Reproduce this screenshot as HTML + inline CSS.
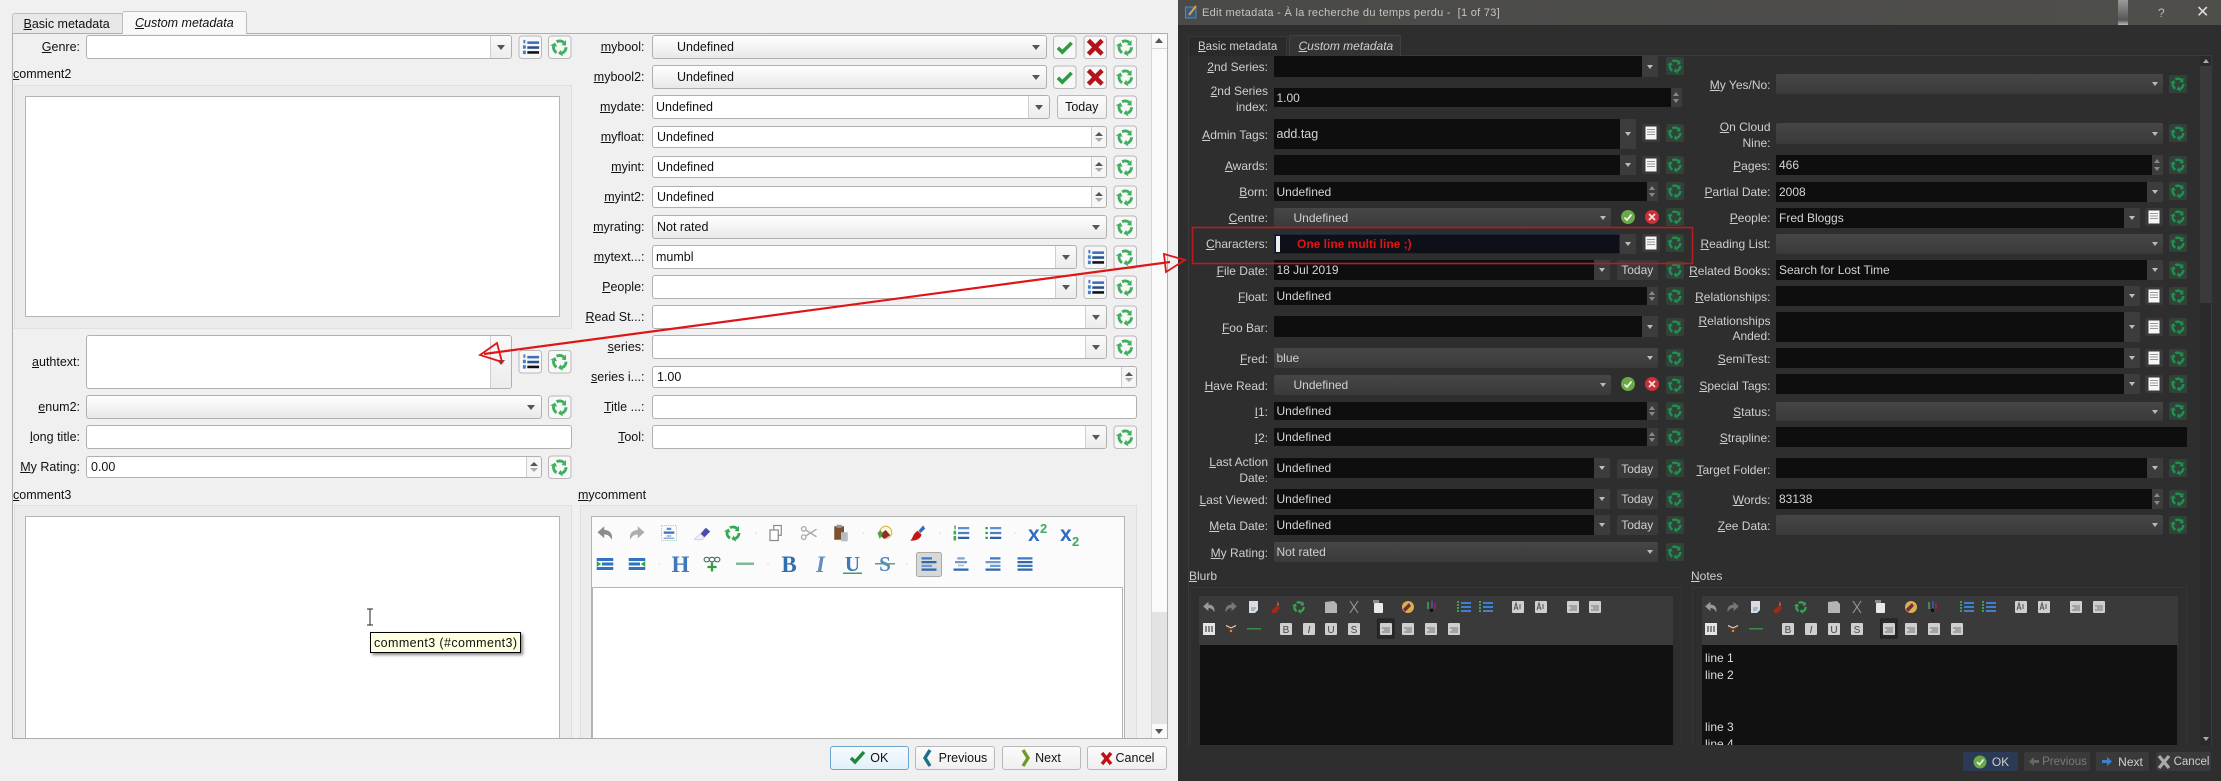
<!DOCTYPE html>
<html><head><meta charset="utf-8"><title>Edit metadata</title>
<style>
html,body{margin:0;padding:0;width:2221px;height:781px;overflow:hidden;background:#f0f0f0}
body{font:12.5px "Liberation Sans",sans-serif;color:#111;position:relative}
.b{position:absolute;box-sizing:border-box;display:flex;align-items:center;white-space:nowrap}
.n{position:absolute;white-space:nowrap;line-height:16px;height:16px}
.p1,.p2,.p3,.p4{position:absolute;text-align:right;line-height:16px;height:16px;white-space:nowrap}
.p1{left:0;width:80px}.p2{left:480px;width:164.5px}.p3{left:1190px;width:78px;margin-top:1px}.p4{left:1680px;width:90.5px;margin-top:1px}
.li{background:#fff;border:1px solid #b0b0b0;border-radius:3px;padding-left:3px}
.lc{background:linear-gradient(#fefefe,#e9e9e9);border:1px solid #b0b0b0;border-radius:3px;padding-left:3px}
.la,.ls{position:absolute;right:0;top:0;bottom:0;border-left:1px solid #cfcfcf;background:linear-gradient(#fafafa,#ececec);border-radius:0 3px 3px 0}
.la{width:20px}.ls{width:14px;background:#f6f6f6}
.la:after,.lz:after{content:"";position:absolute;left:50%;top:50%;margin:-2px 0 0 -4px;border:4px solid transparent;border-top:5px solid #555;border-bottom:0}
.lz{position:absolute;right:0;top:0;bottom:0;width:20px}
.ls:before{content:"";position:absolute;left:3px;top:5px;border:4px solid transparent;border-bottom:4px solid #555;border-top:0}
.ls:after{content:"";position:absolute;left:3px;bottom:5px;border:4px solid transparent;border-top:4px solid #aaa;border-bottom:0}
.gb{position:absolute;box-sizing:border-box;background:#ececec;border:1px solid #e0e0e0}
.te{position:absolute;box-sizing:border-box;background:#fff;border:1px solid #b4b4b4}
.lb{position:absolute;box-sizing:border-box;background:linear-gradient(#fbfbfb,#efefef);border:1px solid #b8b8b8;border-radius:3px;display:flex;align-items:center;justify-content:center}
#dark{position:absolute;left:0;top:0;width:2221px;height:781px;color:#cfcfcf;font-size:12px;filter:blur(.35px)}
#dark u{text-decoration-thickness:1px}
.di{background:#0e0e0e;padding-left:3px;color:#d4d4d4}
.dc{background:linear-gradient(#464646,#3a3a3a);padding-left:3px;color:#d0d0d0;border-radius:2px}
.da,.ds{position:absolute;background:#3c3c3c}
.da:after{content:"";position:absolute;left:50%;top:50%;margin:-2px 0 0 -3px;border:3px solid transparent;border-top:4px solid #bbb;border-bottom:0}
.ds:before{content:"";position:absolute;left:2px;top:4px;border:3px solid transparent;border-bottom:4px solid #888;border-top:0}
.ds:after{content:"";position:absolute;left:2px;bottom:4px;border:3px solid transparent;border-top:4px solid #888;border-bottom:0}
.dz{position:absolute;width:16px}
.dz:after{content:"";position:absolute;left:50%;top:50%;margin:-2px 0 0 -3px;border:3px solid transparent;border-top:4px solid #bbb;border-bottom:0}
.db{position:absolute;box-sizing:border-box;background:#3a3a3a;border-radius:2px;display:flex;align-items:center;justify-content:center;color:#cfcfcf}
svg{position:absolute;left:0;top:0;overflow:visible}
</style></head><body>
<svg width="0" height="0" style="position:absolute"><defs>
<g id="ring"><g id="arc"><path d="M20 12A8 8 0 0 1 14.700 19.500" fill="none" stroke="currentColor" stroke-width="3.800"/><path d="M16.200 23.700L13.200 15.300L9.800 20Z" fill="currentColor"/></g><use href="#arc" transform="rotate(120 12 12)"/><use href="#arc" transform="rotate(240 12 12)"/></g>
<symbol id="R" viewBox="0 0 24 24"><rect x=".5" y=".5" width="23" height="23" rx="3" fill="#f7f7f7" stroke="#b8b8b8"/><g color="#3fae5f" transform="translate(2.400 2.400) scale(.8)"><use href="#ring"/></g></symbol>
<symbol id="LB" viewBox="0 0 24 24"><rect x=".5" y=".5" width="23" height="23" rx="3" fill="#f7f7f7" stroke="#b8b8b8"/><rect x="9" y="6" width="12" height="2.6" fill="#3f6fb5"/><rect x="9" y="11" width="12" height="2.6" fill="#2c4f86"/><rect x="9" y="16" width="12" height="2.6" fill="#111"/><rect x="5" y="4.5" width="2" height="3.5" fill="#3f7fd0"/><rect x="4.5" y="10" width="3" height="3.5" fill="#3f7fd0"/><rect x="4.5" y="15.5" width="3" height="3.5" fill="#3f7fd0"/></symbol>
<symbol id="CB" viewBox="0 0 24 24"><rect x=".5" y=".5" width="23" height="23" rx="3" fill="#f7f7f7" stroke="#b8b8b8"/><path d="M5 12.5l4.5 4.5L19 7.5" fill="none" stroke="#2f9a3f" stroke-width="3.6"/></symbol>
<symbol id="XB" viewBox="0 0 24 24"><rect x=".5" y=".5" width="23" height="23" rx="3" fill="#f7f7f7" stroke="#b8b8b8"/><path d="M5 5L19 19M19 5L5 19" fill="none" stroke="#b3141c" stroke-width="4.6"/></symbol>
<symbol id="DR" viewBox="0 0 18 18"><rect width="18" height="18" rx="2" fill="#324238"/><g color="#1f8f52" transform="translate(1 1) scale(.667)"><use href="#ring"/></g></symbol>
<symbol id="DN" viewBox="0 0 18 18"><rect width="18" height="18" rx="2" fill="#3a3a3a"/><rect x="3.5" y="2.5" width="11" height="13" fill="#f6f6f6"/><path d="M5 5.500h8M5 8h8M5 10.500h8" stroke="#999" stroke-width="1"/></symbol>
<symbol id="DC" viewBox="0 0 14 14"><circle cx="7" cy="7" r="7" fill="#6aa84a"/><path d="M3.5 7.5l2.5 2.5 4.5-5.5" fill="none" stroke="#eaf5e0" stroke-width="1.8"/></symbol>
<symbol id="DX" viewBox="0 0 14 14"><circle cx="7" cy="7" r="7" fill="#c9303a"/><path d="M4 4l6 6M10 4l-6 6" fill="none" stroke="#f5dede" stroke-width="1.8"/></symbol>
<symbol id="un" viewBox="0 0 24 24"><path d="M2 11L11 3V8C18 8 23 13 21 21C18 15 15 14 11 14V19Z" fill="currentColor"/></symbol>
<symbol id="re" viewBox="0 0 24 24"><path d="M22 11L13 3V8C6 8 1 13 3 21C6 15 9 14 13 14V19Z" fill="currentColor"/></symbol>
<symbol id="cl" viewBox="0 0 24 24"><rect x="2" y="2" width="20" height="20" fill="none" stroke="#7fbf9a" stroke-dasharray="1.5 1.5"/><rect x="9" y="5" width="6" height="3" fill="#5f8fd0"/><rect x="5" y="10" width="14" height="3" fill="#3f6fb5"/><rect x="9" y="15" width="6" height="2" fill="#8fb0dc"/><rect x="5" y="18" width="14" height="2" fill="#8fb0dc"/></symbol>
<symbol id="er" viewBox="0 0 24 24"><polygon points="10,13 17,5 23,10 15,18" fill="#4a4ab0"/><polygon points="10,13 15,18 12,21 3,21 2,20" fill="#f0f0f6" stroke="#c4c8d8"/></symbol>
<symbol id="rc" viewBox="0 0 24 24"><g color="#2faa50"><use href="#ring"/></g></symbol>
<symbol id="cp" viewBox="0 0 24 24"><rect x="9" y="2" width="10" height="13" fill="#fff" stroke="#888" stroke-width="1.6"/><rect x="4" y="8" width="11" height="14" fill="#fff" stroke="#888" stroke-width="1.6"/></symbol>
<symbol id="sc" viewBox="0 0 24 24"><g fill="none" stroke="#aaa" stroke-width="1.8"><circle cx="5" cy="6.5" r="3"/><circle cx="5" cy="17.5" r="3"/><path d="M7.5 8L22 17M7.5 16L22 7"/></g></symbol>
<symbol id="pa" viewBox="0 0 24 24"><rect x="3" y="3" width="13" height="18" fill="#7a5232"/><rect x="6" y="1" width="7" height="4" fill="#999"/><rect x="12" y="11" width="9" height="12" fill="#b8bcc0"/></symbol>
<symbol id="bu" viewBox="0 0 24 24"><circle cx="13" cy="11" r="8" fill="#fff6d8" stroke="#e0b84a" stroke-width="1.6"/><polygon points="5,14 13,8 19,15 11,20" fill="#8a3030"/><path d="M2 12L6 8L9 13L5 20Z" fill="#4aa84a"/></symbol>
<symbol id="br" viewBox="0 0 24 24"><polygon points="14,9 20,2 23,6 17,12" fill="#2f6fb5"/><path d="M13 9L18 14C17 20 10 23 3 22C7 19 6 13 13 9Z" fill="#c01818"/></symbol>
<symbol id="ol" viewBox="0 0 24 24"><rect x="8" y="4" width="15" height="3" fill="#5f8fd0"/><rect x="8" y="10.500" width="15" height="3" fill="#4f7fc0"/><rect x="8" y="17" width="15" height="3" fill="#2f5fa8"/><rect x="3" y="2" width="2" height="5" fill="#4aa84a"/><rect x="2" y="9" width="3.500" height="5" fill="#4aa84a"/><rect x="2" y="16" width="3.500" height="6" fill="#4aa84a"/></symbol>
<symbol id="ul" viewBox="0 0 24 24"><rect x="8" y="4" width="15" height="3" fill="#5f8fd0"/><rect x="8" y="10.500" width="15" height="3" fill="#4f7fc0"/><rect x="8" y="17" width="15" height="3" fill="#2f5fa8"/><rect x="2" y="4" width="3" height="3" fill="#2f8f4a"/><rect x="2" y="10.500" width="3" height="3" fill="#2f8f4a"/><rect x="2" y="17" width="3" height="3" fill="#2f8f4a"/></symbol>
<symbol id="in" viewBox="0 0 24 24"><rect x="1" y="4" width="22" height="4" fill="#2f74c0"/><rect x="8" y="10" width="15" height="4" fill="#2f74c0"/><rect x="1" y="16" width="22" height="4" fill="#2f74c0"/><polygon points="1,8 7,12 1,16" fill="#2faa50"/></symbol>
<symbol id="ou" viewBox="0 0 24 24"><rect x="1" y="4" width="22" height="4" fill="#2f74c0"/><rect x="1" y="10" width="15" height="4" fill="#2f74c0"/><rect x="1" y="16" width="22" height="4" fill="#2f74c0"/><polygon points="23,8 17,12 23,16" fill="#2faa50"/></symbol>
<symbol id="lk" viewBox="0 0 24 24"><g fill="none" stroke="#3f6f60" stroke-width="1.500"><rect x="1.500" y="3" width="7" height="6" rx="3"/><rect x="8.500" y="3" width="7" height="6" rx="3"/><rect x="15.500" y="3" width="7" height="6" rx="3"/></g><path d="M12 10V22M6 16H18" stroke="#2f9a3f" stroke-width="3"/></symbol>
<symbol id="al" viewBox="0 0 24 24"><rect x="2" y="3" width="14" height="3" fill="#3f78c0"/><rect x="2" y="8" width="20" height="3" fill="#2f68b0"/><rect x="2" y="13" width="14" height="3" fill="#6f9ad0"/><rect x="2" y="18" width="20" height="3" fill="#2f68b0"/></symbol>
<symbol id="ac" viewBox="0 0 24 24"><rect x="7" y="3" width="10" height="3" fill="#7fa6d8"/><rect x="4" y="8" width="16" height="3" fill="#6f9ad0"/><rect x="8" y="13" width="8" height="2" fill="#9fbce0"/><rect x="2" y="18" width="20" height="3" fill="#2f68b0"/></symbol>
<symbol id="ar" viewBox="0 0 24 24"><rect x="8" y="3" width="14" height="3" fill="#3f78c0"/><rect x="2" y="8" width="20" height="3" fill="#6f9ad0"/><rect x="8" y="13" width="14" height="3" fill="#6f9ad0"/><rect x="2" y="18" width="20" height="3" fill="#2f68b0"/></symbol>
<symbol id="aj" viewBox="0 0 24 24"><rect x="2" y="3" width="20" height="3" fill="#3f78c0"/><rect x="2" y="8" width="20" height="3" fill="#2f68b0"/><rect x="2" y="13" width="20" height="3" fill="#3f78c0"/><rect x="2" y="18" width="20" height="3" fill="#2f68b0"/></symbol>
<symbol id="dd" viewBox="0 0 14 14"><path d="M2 1H11V10L8 13H2Z" fill="#d8dde4"/><path d="M4 8h5M4 10h4" stroke="#7a8aa0"/></symbol>
<symbol id="dcl" viewBox="0 0 14 14"><path d="M2 10L7 5L10 8L6 13H2Z" fill="#a02818"/><path d="M8 1L9 6L7 5Z" fill="#e07040"/></symbol>
<symbol id="dpg" viewBox="0 0 14 14"><path d="M1 2L10 1L13 4V13H1Z" fill="#b4b4b4"/></symbol>
<symbol id="dsc" viewBox="0 0 14 14"><path d="M3 1L11 13M11 1L3 13" stroke="#999" stroke-width="1.100"/></symbol>
<symbol id="dpa" viewBox="0 0 14 14"><rect x="3" y="3" width="9" height="10" rx="1" fill="#e8e8e8"/><rect x="2" y="0" width="6" height="3" fill="#8a8a8a"/></symbol>
<symbol id="dba" viewBox="0 0 14 14"><circle cx="7" cy="7" r="6" fill="#d8b050"/><path d="M2 9L8 3L10 6L4 12Z" fill="#7a2a40"/></symbol>
<symbol id="ddr" viewBox="0 0 14 14"><rect x="3" y="2" width="2" height="7" fill="#3f8f4a"/><rect x="7" y="1" width="2" height="7" fill="#4a4aa0"/><rect x="10" y="3" width="2" height="6" fill="#8a2a40"/><rect x="6" y="9" width="3" height="3" fill="#111"/></symbol>
<symbol id="dl1" viewBox="0 0 14 14"><path d="M4 3h10M4 7h10M4 11h10" stroke="#3f7fd0" stroke-width="2"/><path d="M1 1v12" stroke="#3fa050" stroke-width="2" stroke-dasharray="2 1"/></symbol>
<symbol id="dsq" viewBox="0 0 14 14"><rect x="1" y="1" width="12" height="12" rx="1" fill="#cfcfcf"/></symbol>
<symbol id="da1" viewBox="0 0 14 14"><rect x="1" y="1" width="12" height="12" rx="1" fill="#cfcfcf"/><path d="M3 10L5 3L7 10M4 8H6M9 4v5" stroke="#555" fill="none"/></symbol>
<symbol id="di1" viewBox="0 0 14 14"><rect x="1" y="1" width="12" height="12" rx="1" fill="#cfcfcf"/><path d="M3 6h8M5 8h6M3 10h8" stroke="#777"/></symbol>
<symbol id="dh" viewBox="0 0 14 14"><rect x="1" y="1" width="12" height="12" fill="#e4e4e4"/><path d="M4 4v6M7 4v6M10 4v6" stroke="#444" stroke-width="1.200"/></symbol>
<symbol id="dlk" viewBox="0 0 14 14"><path d="M1 3L7 5L13 3L10 8L7 12L4 8Z" fill="#5a3a28"/><path d="M2 3.500L7 6L12 3.500" stroke="#ddd" fill="none"/><rect x="6" y="8" width="2" height="2" fill="#d09040"/></symbol>
</defs></svg>

<!-- LEFT LIGHT WINDOW -->
<div class="b" style="left:11.5px;top:13px;width:111px;height:21px;background:#e8e8e8;border:1px solid #bdbdbd;border-bottom:0;border-radius:3px 3px 0 0;padding-left:11px"><span><u>B</u>asic metadata</span></div>
<div class="b" style="left:11.5px;top:33px;width:1156px;height:705.500px;background:#f0f0f0;border:1px solid #aeaeae"></div>
<div class="b" style="left:122px;top:11px;width:125px;height:23px;background:#f8f8f8;border:1px solid #bdbdbd;border-bottom:0;border-radius:3px 3px 0 0;padding-left:12px;font-style:italic"><span><u>C</u>ustom metadata</span></div>

<div class="p1" style="top:39px"><u>G</u>enre:</div>
<div class="b li" style="left:86px;top:35px;width:426px;height:24px"><div class="la"></div></div>
<div class="n" style="left:13px;top:66px"><u>c</u>omment2</div>
<div class="gb" style="left:14px;top:85px;width:558px;height:244px"></div>
<div class="te" style="left:25px;top:96px;width:535px;height:221px"></div>
<div class="p1" style="top:354px"><u>a</u>uthtext:</div>
<div class="b li" style="left:86px;top:335px;width:426px;height:54px"><div class="la"></div></div>
<div class="p1" style="top:399px"><u>e</u>num2:</div>
<div class="b lc" style="left:86px;top:395px;width:456px;height:24px"><div class="lz"></div></div>
<div class="p1" style="top:429px"><u>l</u>ong title:</div>
<div class="b li" style="left:86px;top:425px;width:486px;height:24px"></div>
<div class="p1" style="top:459px"><u>M</u>y Rating:</div>
<div class="b li" style="left:86px;top:456px;width:456px;height:22px;padding-left:4px">0.00<div class="ls"></div></div>
<div class="n" style="left:13px;top:487px"><u>c</u>omment3</div>
<div class="gb" style="left:14px;top:505px;width:558px;height:233px;border-bottom:0"></div>
<div class="te" style="left:25px;top:516px;width:535px;height:222px;border-bottom:0"></div>

<div class="p2" style="top:39px"><u>m</u>ybool:</div>
<div class="b lc" style="left:652px;top:35px;width:395px;height:24px;padding-left:24px">Undefined<div class="lz"></div></div>
<div class="p2" style="top:69px"><u>m</u>ybool2:</div>
<div class="b lc" style="left:652px;top:65px;width:395px;height:24px;padding-left:24px">Undefined<div class="lz"></div></div>
<div class="p2" style="top:99px"><u>m</u>ydate:</div>
<div class="b li" style="left:652px;top:95px;width:398px;height:24px">Undefined<div class="la"></div></div>
<div class="lb" style="left:1056.500px;top:95px;width:50.500px;height:24px">Today</div>
<div class="p2" style="top:129px"><u>m</u>yfloat:</div>
<div class="b li" style="left:652px;top:126px;width:455px;height:22px;padding-left:4px">Undefined<div class="ls"></div></div>
<div class="p2" style="top:159px"><u>m</u>yint:</div>
<div class="b li" style="left:652px;top:156px;width:455px;height:22px;padding-left:4px">Undefined<div class="ls"></div></div>
<div class="p2" style="top:189px"><u>m</u>yint2:</div>
<div class="b li" style="left:652px;top:186px;width:455px;height:22px;padding-left:4px">Undefined<div class="ls"></div></div>
<div class="p2" style="top:219px"><u>m</u>yrating:</div>
<div class="b lc" style="left:652px;top:215px;width:455px;height:24px;padding-left:4px">Not rated<div class="lz"></div></div>
<div class="p2" style="top:249px"><u>m</u>ytext...:</div>
<div class="b li" style="left:652px;top:245px;width:425px;height:24px">mumbl<div class="la"></div></div>
<div class="p2" style="top:279px"><u>P</u>eople:</div>
<div class="b li" style="left:652px;top:275px;width:425px;height:24px"><div class="la"></div></div>
<div class="p2" style="top:309px"><u>R</u>ead St...:</div>
<div class="b li" style="left:652px;top:305px;width:455px;height:24px"><div class="la"></div></div>
<div class="p2" style="top:339px"><u>s</u>eries:</div>
<div class="b li" style="left:652px;top:335px;width:455px;height:24px"><div class="la"></div></div>
<div class="p2" style="top:369px"><u>s</u>eries i...:</div>
<div class="b li" style="left:652px;top:366px;width:485px;height:22px;padding-left:4px">1.00<div class="ls"></div></div>
<div class="p2" style="top:399px"><u>T</u>itle ...:</div>
<div class="b li" style="left:652px;top:395px;width:485px;height:24px"></div>
<div class="p2" style="top:429px"><u>T</u>ool:</div>
<div class="b li" style="left:652px;top:425px;width:455px;height:24px"><div class="la"></div></div>
<div class="n" style="left:578px;top:487px"><u>m</u>ycomment</div>
<div class="gb" style="left:579.500px;top:505px;width:557px;height:233px;border-bottom:0"></div>
<div class="te" style="left:590.500px;top:516px;width:534px;height:222px;background:#fbfbfb;border-bottom:0"></div>
<div class="te" style="left:592px;top:586.500px;width:531px;height:151.500px;border-bottom:0"></div>

<!-- light scrollbar -->
<div class="b" style="left:1151px;top:34px;width:16px;height:704px;background:#fafafa;border-left:1px solid #d8d8d8"></div>
<div class="b" style="left:1152px;top:612px;width:15px;height:112px;background:#e3e3e3"></div>
<div class="b" style="left:1152px;top:48px;width:15px;height:1px;background:#d8d8d8"></div>
<div class="b" style="left:1155px;top:38px;width:0;height:0;border:4px solid transparent;border-bottom:5px solid #555;border-top:0"></div>
<div class="b" style="left:1155px;top:729px;width:0;height:0;border:4px solid transparent;border-top:5px solid #555;border-bottom:0"></div>

<!-- light dialog buttons -->
<div class="lb" style="left:829.500px;top:746px;width:79.500px;height:24px;background:linear-gradient(#f6fbfe,#e2f0f9);border-color:#6aa5cf;padding-left:20px">OK</div>
<div class="lb" style="left:915px;top:746px;width:80px;height:24px;padding-left:16px">Previous</div>
<div class="lb" style="left:1001.500px;top:746px;width:79px;height:24px;padding-left:14px">Next</div>
<div class="lb" style="left:1087px;top:746px;width:80px;height:24px;padding-left:16px">Cancel</div>

<!-- tooltip -->
<div class="b" style="left:370px;top:632px;width:151px;height:21px;background:#ffffe1;border:1px solid #000;box-shadow:2px 2px 3px #888;padding-left:3px;letter-spacing:.4px">comment3 (#comment3)</div>

<!-- light overlay icons -->
<svg width="2221" height="781">
<g>
<use href="#R" x="548" y="35.500" width="23.500" height="23.500"/><use href="#LB" x="518.500" y="35.500" width="23.500" height="23.500"/>
<use href="#R" x="548" y="350" width="23.500" height="23.500"/><use href="#LB" x="518.500" y="350" width="23.500" height="23.500"/>
<use href="#R" x="548" y="395.500" width="23.500" height="23.500"/><use href="#R" x="548" y="455.500" width="23.500" height="23.500"/>
<use href="#CB" x="1053" y="35.500" width="23.500" height="23.500"/><use href="#XB" x="1083.500" y="35.500" width="23.500" height="23.500"/>
<use href="#CB" x="1053" y="65.500" width="23.500" height="23.500"/><use href="#XB" x="1083.500" y="65.500" width="23.500" height="23.500"/>
<use href="#LB" x="1083.500" y="245.500" width="23.500" height="23.500"/><use href="#LB" x="1083.500" y="275.500" width="23.500" height="23.500"/>
<use href="#R" x="1113.500" y="35.500" width="23.500" height="23.500"/><use href="#R" x="1113.500" y="65.500" width="23.500" height="23.500"/><use href="#R" x="1113.500" y="95.500" width="23.500" height="23.500"/><use href="#R" x="1113.500" y="125.500" width="23.500" height="23.500"/><use href="#R" x="1113.500" y="155.500" width="23.500" height="23.500"/><use href="#R" x="1113.500" y="185.500" width="23.500" height="23.500"/><use href="#R" x="1113.500" y="215.500" width="23.500" height="23.500"/><use href="#R" x="1113.500" y="245.500" width="23.500" height="23.500"/><use href="#R" x="1113.500" y="275.500" width="23.500" height="23.500"/><use href="#R" x="1113.500" y="305.500" width="23.500" height="23.500"/><use href="#R" x="1113.500" y="335.500" width="23.500" height="23.500"/><use href="#R" x="1113.500" y="425.500" width="23.500" height="23.500"/>
</g>
<!-- mycomment toolbar -->
<g color="#8c8c8c"><use href="#un" x="596" y="524" width="18" height="18"/></g><g color="#adadad"><use href="#re" x="628" y="524" width="18" height="18"/></g>
<use href="#cl" x="660" y="524" width="18" height="18"/><use href="#er" x="693" y="524" width="18" height="18"/><use href="#rc" x="724" y="524" width="18" height="18"/>
<use href="#cp" x="767" y="524" width="18" height="18"/><use href="#sc" x="800" y="524" width="18" height="18"/><use href="#pa" x="832" y="524" width="18" height="18"/>
<use href="#bu" x="876" y="524" width="18" height="18"/><use href="#br" x="908" y="524" width="18" height="18"/><use href="#ol" x="952" y="524" width="18" height="18"/><use href="#ul" x="984" y="524" width="18" height="18"/>
<text x="1028" y="541" font-family="Liberation Sans" font-weight="bold" font-size="21" fill="#2f6fc0">x</text><text x="1040" y="533" font-family="Liberation Sans" font-size="13" font-weight="bold" fill="#3fa860">2</text>
<text x="1060" y="541" font-family="Liberation Sans" font-weight="bold" font-size="21" fill="#2f6fc0">x</text><text x="1072" y="546" font-family="Liberation Sans" font-size="13" font-weight="bold" fill="#3fa860">2</text>
<g fill="#d8d8d8"><circle cx="756" cy="533" r=".8"/><circle cx="863.500" cy="533" r=".8"/><circle cx="940" cy="533" r=".8"/><circle cx="1015" cy="533" r=".8"/><circle cx="659.500" cy="564" r=".8"/><circle cx="768" cy="564" r=".8"/><circle cx="907" cy="564" r=".8"/></g>
<use href="#in" x="596" y="555" width="18" height="18"/><use href="#ou" x="628" y="555" width="18" height="18"/>
<text x="680.500" y="572" text-anchor="middle" font-family="Liberation Serif" font-weight="bold" font-size="23" fill="#3f78b8">H</text>
<use href="#lk" x="703" y="555" width="18" height="18"/><rect x="736" y="562.500" width="18" height="2.500" fill="#7fb89a"/>
<text x="789" y="572" text-anchor="middle" font-family="Liberation Serif" font-weight="bold" font-size="23" fill="#2f6fb0">B</text>
<text x="820.500" y="572" text-anchor="middle" font-family="Liberation Serif" font-style="italic" font-weight="bold" font-size="23" fill="#5f8fc0">I</text>
<text x="852.500" y="571" text-anchor="middle" font-family="Liberation Serif" font-weight="bold" font-size="21" fill="#3f78b8">U</text><rect x="843" y="572.500" width="19" height="1.500" fill="#3fa060"/>
<text x="885" y="571" text-anchor="middle" font-family="Liberation Serif" font-weight="bold" font-size="21" fill="#4f84bc">S</text><rect x="875" y="563" width="20" height="1.500" fill="#5fa080"/>
<rect x="916.500" y="552.500" width="25" height="24" rx="2" fill="#d8d8d8" stroke="#aaa"/><use href="#al" x="920" y="555" width="18" height="18"/>
<use href="#ac" x="952" y="555" width="18" height="18"/><use href="#ar" x="984" y="555" width="18" height="18"/><use href="#aj" x="1016" y="555" width="18" height="18"/>
<!-- dialog button icons -->
<path d="M851 758l4 4 9-10" fill="none" stroke="#1f8a3a" stroke-width="3.400"/>
<path d="M930 750l-5 8 5 8" fill="none" stroke="#1f6f88" stroke-width="3.400"/>
<path d="M1023 750l5 8-5 8" fill="none" stroke="#6f9a2a" stroke-width="3.400"/>
<path d="M1102 753l9 11M1111 753l-9 11" fill="none" stroke="#c01018" stroke-width="3.400"/>
<!-- I-beam -->
<path d="M367 609h6M367 625h6M370 609v16" stroke="#222" fill="none"/>
</svg>

<!-- RIGHT DARK WINDOW -->
<div id="dark">
<div class="b" style="left:1178px;top:0;width:1043px;height:781px;background:#2e2e2e"></div>
<div class="b" style="left:1178px;top:0;width:1043px;height:25px;background:linear-gradient(90deg,#4a4a48,#4f4e4b);padding-left:24px;color:#c4c4c4;font-size:11px;letter-spacing:.3px">Edit metadata - À la recherche du temps perdu -&nbsp; [1 of 73]</div>
<div class="b" style="left:2117.500px;top:0;width:10px;height:25px;background:linear-gradient(#9a9a9a,#555 80%,#bbb)"></div>
<div class="n" style="left:2158px;top:5px;color:#bbb">?</div>
<div class="n" style="left:2196px;top:5px;font-size:16px;color:#ddd">✕</div>
<div class="b" style="left:1188px;top:55px;width:1023.500px;height:690.500px;border:1px solid #3a3a3a;border-bottom:0"></div>
<div class="b" style="left:1188px;top:36px;width:99px;height:20px;background:#2a2a2a;padding-left:9px;border:1px solid #383838;border-bottom:0;font-size:11.500px"><span><u>B</u>asic metadata</span></div>
<div class="b" style="left:1288.500px;top:35px;width:112px;height:21px;background:#343434;padding-left:9px;font-style:italic;border:1px solid #404040;border-bottom:0"><span><u>C</u>ustom metadata</span></div>

<div class="p3" style="top:58px"><u>2</u>nd Series:</div>
<div class="b di" style="left:1273.500px;top:56px;width:368.500px;height:21px"></div><div class="da" style="left:1642px;top:56px;width:16px;height:21px"></div>
<div class="p3" style="top:82px"><u>2</u>nd Series</div><div class="p3" style="top:98px">index:</div>
<div class="b di" style="left:1273.500px;top:88px;width:397.500px;height:19px">1.00</div><div class="ds" style="left:1671px;top:88px;width:11px;height:19px"></div>
<div class="p3" style="top:126px"><u>A</u>dmin Tags:</div>
<div class="b di" style="left:1273.500px;top:119px;width:346.500px;height:30px;font-size:12.500px">add.tag</div><div class="da" style="left:1620px;top:119px;width:16px;height:30px"></div>
<div class="p3" style="top:157px"><u>A</u>wards:</div>
<div class="b di" style="left:1273.500px;top:155px;width:346.500px;height:20px"></div><div class="da" style="left:1620px;top:155px;width:16px;height:20px"></div>
<div class="p3" style="top:183px"><u>B</u>orn:</div>
<div class="b di" style="left:1273.500px;top:182px;width:373.500px;height:19px">Undefined</div><div class="ds" style="left:1647px;top:182px;width:11px;height:19px"></div>
<div class="p3" style="top:209px"><u>C</u>entre:</div>
<div class="b dc" style="left:1273.500px;top:208px;width:337px;height:20px;padding-left:20px">Undefined<div class="dz" style="right:0;top:0;bottom:0"></div></div>
<div class="p3" style="top:235px"><u>C</u>haracters:</div>
<div class="b di" style="left:1273.500px;top:234px;width:346.500px;height:20px;background:#0e1018;padding-left:23.500px;color:#e01414;font-weight:bold;font-size:12px;box-shadow:inset 0 0 0 1px #1c2540">One line multi line ;)</div><div class="da" style="left:1620px;top:234px;width:16px;height:20px"></div>
<div class="b" style="left:1276px;top:236px;width:3.500px;height:16px;background:#eee"></div>
<div class="p3" style="top:262px"><u>F</u>ile Date:</div>
<div class="b di" style="left:1273.500px;top:260px;width:320.500px;height:20px">18 Jul 2019</div><div class="da" style="left:1594px;top:260px;width:16px;height:20px"></div>
<div class="db" style="left:1616.500px;top:260px;width:41.500px;height:20px">Today</div>
<div class="p3" style="top:288px"><u>F</u>loat:</div>
<div class="b di" style="left:1273.500px;top:287px;width:373.500px;height:18px">Undefined</div><div class="ds" style="left:1647px;top:287px;width:11px;height:18px"></div>
<div class="p3" style="top:319px"><u>F</u>oo Bar:</div>
<div class="b di" style="left:1273.500px;top:316px;width:368.500px;height:21px"></div><div class="da" style="left:1642px;top:316px;width:16px;height:21px"></div>
<div class="p3" style="top:350px"><u>F</u>red:</div>
<div class="b dc" style="left:1273.500px;top:348px;width:384.500px;height:20px">blue<div class="dz" style="right:0;top:0;bottom:0"></div></div>
<div class="p3" style="top:377px"><u>H</u>ave Read:</div>
<div class="b dc" style="left:1273.500px;top:375px;width:337px;height:20px;padding-left:20px">Undefined<div class="dz" style="right:0;top:0;bottom:0"></div></div>
<div class="p3" style="top:403px"><u>I</u>1:</div>
<div class="b di" style="left:1273.500px;top:402px;width:373.500px;height:18px">Undefined</div><div class="ds" style="left:1647px;top:402px;width:11px;height:18px"></div>
<div class="p3" style="top:429px"><u>I</u>2:</div>
<div class="b di" style="left:1273.500px;top:428px;width:373.500px;height:18px">Undefined</div><div class="ds" style="left:1647px;top:428px;width:11px;height:18px"></div>
<div class="p3" style="top:453px"><u>L</u>ast Action</div><div class="p3" style="top:469px">Date:</div>
<div class="b di" style="left:1273.500px;top:458px;width:320.500px;height:20px">Undefined</div><div class="da" style="left:1594px;top:458px;width:16px;height:20px"></div>
<div class="db" style="left:1616.500px;top:459px;width:41.500px;height:19px">Today</div>
<div class="p3" style="top:491px"><u>L</u>ast Viewed:</div>
<div class="b di" style="left:1273.500px;top:489px;width:320.500px;height:20px">Undefined</div><div class="da" style="left:1594px;top:489px;width:16px;height:20px"></div>
<div class="db" style="left:1616.500px;top:489px;width:41.500px;height:20px">Today</div>
<div class="p3" style="top:517px"><u>M</u>eta Date:</div>
<div class="b di" style="left:1273.500px;top:515px;width:320.500px;height:20px">Undefined</div><div class="da" style="left:1594px;top:515px;width:16px;height:20px"></div>
<div class="db" style="left:1616.500px;top:515px;width:41.500px;height:20px">Today</div>
<div class="p3" style="top:544px"><u>M</u>y Rating:</div>
<div class="b dc" style="left:1273.500px;top:542px;width:384.500px;height:20px">Not rated<div class="dz" style="right:0;top:0;bottom:0"></div></div>

<div class="p4" style="top:76px"><u>M</u>y Yes/No:</div>
<div class="b dc" style="left:1776px;top:74px;width:386.500px;height:20px"><div class="dz" style="right:0;top:0;bottom:0"></div></div>
<div class="p4" style="top:118px"><u>O</u>n Cloud</div><div class="p4" style="top:134px">Nine:</div>
<div class="b dc" style="left:1776px;top:123px;width:386.500px;height:21px"><div class="dz" style="right:0;top:0;bottom:0"></div></div>
<div class="p4" style="top:157px"><u>P</u>ages:</div>
<div class="b di" style="left:1776px;top:155px;width:376px;height:20px">466</div><div class="ds" style="left:2152px;top:155px;width:10.500px;height:20px"></div>
<div class="p4" style="top:183px"><u>P</u>artial Date:</div>
<div class="b di" style="left:1776px;top:182px;width:370.500px;height:20px">2008</div><div class="da" style="left:2146.500px;top:182px;width:16px;height:20px"></div>
<div class="p4" style="top:209px"><u>P</u>eople:</div>
<div class="b di" style="left:1776px;top:208px;width:347.500px;height:20px">Fred Bloggs</div><div class="da" style="left:2123.500px;top:208px;width:16.500px;height:20px"></div>
<div class="p4" style="top:235px"><u>R</u>eading List:</div>
<div class="b dc" style="left:1776px;top:234px;width:386.500px;height:20px"><div class="dz" style="right:0;top:0;bottom:0"></div></div>
<div class="p4" style="top:262px"><u>R</u>elated Books:</div>
<div class="b di" style="left:1776px;top:260px;width:370.500px;height:20px">Search for Lost Time</div><div class="da" style="left:2146.500px;top:260px;width:16px;height:20px"></div>
<div class="p4" style="top:288px"><u>R</u>elationships:</div>
<div class="b di" style="left:1776px;top:286px;width:347.500px;height:20px"></div><div class="da" style="left:2123.500px;top:286px;width:16.500px;height:20px"></div>
<div class="p4" style="top:312px"><u>R</u>elationships</div><div class="p4" style="top:327px">Anded:</div>
<div class="b di" style="left:1776px;top:312px;width:347.500px;height:30px"></div><div class="da" style="left:2123.500px;top:312px;width:16.500px;height:30px"></div>
<div class="p4" style="top:350px"><u>S</u>emiTest:</div>
<div class="b di" style="left:1776px;top:348px;width:347.500px;height:20px"></div><div class="da" style="left:2123.500px;top:348px;width:16.500px;height:20px"></div>
<div class="p4" style="top:377px"><u>S</u>pecial Tags:</div>
<div class="b di" style="left:1776px;top:374px;width:347.500px;height:20px"></div><div class="da" style="left:2123.500px;top:374px;width:16.500px;height:20px"></div>
<div class="p4" style="top:403px"><u>S</u>tatus:</div>
<div class="b dc" style="left:1776px;top:402px;width:386.500px;height:19px"><div class="dz" style="right:0;top:0;bottom:0"></div></div>
<div class="p4" style="top:429px"><u>S</u>trapline:</div>
<div class="b di" style="left:1776px;top:427px;width:411px;height:20px"></div>
<div class="p4" style="top:461px"><u>T</u>arget Folder:</div>
<div class="b di" style="left:1776px;top:458px;width:370.500px;height:20px"></div><div class="da" style="left:2146.500px;top:458px;width:16px;height:20px"></div>
<div class="p4" style="top:491px"><u>W</u>ords:</div>
<div class="b di" style="left:1776px;top:489px;width:376px;height:20px">83138</div><div class="ds" style="left:2152px;top:489px;width:10.500px;height:20px"></div>
<div class="p4" style="top:517px"><u>Z</u>ee Data:</div>
<div class="b dc" style="left:1776px;top:515px;width:386.500px;height:20px"><div class="dz" style="right:0;top:0;bottom:0"></div></div>

<div class="n" style="left:1189px;top:568px"><u>B</u>lurb</div>
<div class="b" style="left:1190px;top:587px;width:492px;height:158px;border:1px solid #353535;border-bottom:0"></div>
<div class="b" style="left:1199px;top:596px;width:474px;height:49px;background:#3a3a3a"></div>
<div class="b" style="left:1199.500px;top:645px;width:473px;height:100px;background:#111"></div>
<div class="n" style="left:1691px;top:568px"><u>N</u>otes</div>
<div class="b" style="left:1692px;top:587px;width:495px;height:158px;border:1px solid #353535;border-bottom:0"></div>
<div class="b" style="left:1701.500px;top:596px;width:476px;height:49px;background:#3a3a3a"></div>
<div class="b" style="left:1702px;top:645px;width:475px;height:100px;background:#111;overflow:hidden;display:block;color:#ddd;padding-left:3px"><div style="position:absolute;top:5px;line-height:17.300px">line 1<br>line 2<br><br><br>line 3<br>line 4</div></div>

<!-- dark scrollbar -->
<div class="b" style="left:2200px;top:56px;width:11px;height:689px;background:#2a2a2a"></div>
<div class="b" style="left:2200px;top:66px;width:11px;height:237px;background:#3a3a3a"></div>
<div class="b" style="left:2203px;top:59px;width:0;height:0;border:3px solid transparent;border-bottom:4px solid #aaa;border-top:0"></div>
<div class="b" style="left:2203px;top:737px;width:0;height:0;border:3px solid transparent;border-top:4px solid #aaa;border-bottom:0"></div>

<!-- dark dialog buttons -->
<div class="db" style="left:1963px;top:752px;width:55px;height:19px;background:#2b3a55;padding-left:20px;font-size:12px">OK</div>
<div class="db" style="left:2023.500px;top:752px;width:66px;height:19px;padding-left:16px;color:#7a7a7a;font-size:11.500px">Previous</div>
<div class="db" style="left:2096px;top:752px;width:53px;height:19px;padding-left:16px;font-size:12px">Next</div>
<div class="db" style="left:2156px;top:752px;width:55px;height:19px;padding-left:16px;font-size:11.500px">Cancel</div>

<svg width="2221" height="781">
<!-- title icon -->
<rect x="1185.500" y="7" width="10.500" height="11" fill="#3a5a80" stroke="#5a86b8"/><path d="M1189 15l7-9" stroke="#e0a040" stroke-width="2"/>
<!-- dark recycle left -->
<use href="#DR" x="1666" y="57" width="18" height="18"/><use href="#DR" x="1666" y="124" width="18" height="18"/><use href="#DR" x="1666" y="156" width="18" height="18"/><use href="#DR" x="1666" y="182" width="18" height="18"/><use href="#DR" x="1666" y="208" width="18" height="18"/><use href="#DR" x="1666" y="234" width="18" height="18"/><use href="#DR" x="1666" y="261" width="18" height="18"/><use href="#DR" x="1666" y="287" width="18" height="18"/><use href="#DR" x="1666" y="318" width="18" height="18"/><use href="#DR" x="1666" y="349" width="18" height="18"/><use href="#DR" x="1666" y="376" width="18" height="18"/><use href="#DR" x="1666" y="402" width="18" height="18"/><use href="#DR" x="1666" y="428" width="18" height="18"/><use href="#DR" x="1666" y="459" width="18" height="18"/><use href="#DR" x="1666" y="490" width="18" height="18"/><use href="#DR" x="1666" y="516" width="18" height="18"/><use href="#DR" x="1666" y="543" width="18" height="18"/>
<!-- dark recycle right -->
<use href="#DR" x="2169" y="75" width="18" height="18"/><use href="#DR" x="2169" y="124" width="18" height="18"/><use href="#DR" x="2169" y="156" width="18" height="18"/><use href="#DR" x="2169" y="182" width="18" height="18"/><use href="#DR" x="2169" y="208" width="18" height="18"/><use href="#DR" x="2169" y="234" width="18" height="18"/><use href="#DR" x="2169" y="261" width="18" height="18"/><use href="#DR" x="2169" y="287" width="18" height="18"/><use href="#DR" x="2169" y="318" width="18" height="18"/><use href="#DR" x="2169" y="349" width="18" height="18"/><use href="#DR" x="2169" y="375" width="18" height="18"/><use href="#DR" x="2169" y="402" width="18" height="18"/><use href="#DR" x="2169" y="459" width="18" height="18"/><use href="#DR" x="2169" y="490" width="18" height="18"/><use href="#DR" x="2169" y="516" width="18" height="18"/>
<!-- notes buttons -->
<use href="#DN" x="1642" y="124" width="18" height="18"/><use href="#DN" x="1642" y="156" width="18" height="18"/><use href="#DN" x="1642" y="234" width="18" height="18"/>
<use href="#DN" x="2145" y="208" width="18" height="18"/><use href="#DN" x="2145" y="287" width="18" height="18"/><use href="#DN" x="2145" y="318" width="18" height="18"/><use href="#DN" x="2145" y="349" width="18" height="18"/><use href="#DN" x="2145" y="375" width="18" height="18"/>
<use href="#DC" x="1621" y="210" width="14" height="14"/><use href="#DX" x="1645" y="210" width="14" height="14"/><use href="#DC" x="1621" y="377" width="14" height="14"/><use href="#DX" x="1645" y="377" width="14" height="14"/>
<!-- Blurb toolbar -->
<g color="#999"><use href="#un" x="1202" y="600" width="14" height="14"/></g><g color="#777"><use href="#re" x="1224" y="600" width="14" height="14"/></g>
<use href="#dd" x="1247" y="600" width="14" height="14"/><use href="#dcl" x="1270" y="600" width="14" height="14"/><g color="#1f8a50"><use href="#rc" x="1292" y="600" width="14" height="14"/></g>
<use href="#dpg" x="1324" y="600" width="14" height="14"/><use href="#dsc" x="1347" y="600" width="14" height="14"/><use href="#dpa" x="1371" y="600" width="14" height="14"/><use href="#dba" x="1401" y="600" width="14" height="14"/><use href="#ddr" x="1424" y="600" width="14" height="14"/><use href="#dl1" x="1457" y="600" width="14" height="14"/><use href="#dl1" x="1479" y="600" width="14" height="14"/>
<use href="#da1" x="1511" y="600" width="14" height="14"/><use href="#da1" x="1534" y="600" width="14" height="14"/><use href="#di1" x="1566" y="600" width="14" height="14"/><use href="#di1" x="1588" y="600" width="14" height="14"/>
<use href="#dh" x="1202" y="622" width="14" height="14"/><use href="#dlk" x="1224" y="622" width="14" height="14"/><rect x="1247" y="628" width="14" height="1.500" fill="#3a8a4a"/>
<rect x="1377.500" y="619" width="16.500" height="19" fill="#2a2a2a" stroke="#1e1e1e"/>
<use href="#dsq" x="1279" y="622" width="14" height="14"/><use href="#dsq" x="1302" y="622" width="14" height="14"/><use href="#dsq" x="1324" y="622" width="14" height="14"/><use href="#dsq" x="1347" y="622" width="14" height="14"/><use href="#di1" x="1379" y="622" width="14" height="14"/><use href="#di1" x="1401" y="622" width="14" height="14"/><use href="#di1" x="1424" y="622" width="14" height="14"/><use href="#di1" x="1447" y="622" width="14" height="14"/>
<g font-family="Liberation Sans" font-size="10" fill="#444" text-anchor="middle"><text x="1286" y="633">B</text><text x="1309" y="633" font-style="italic">I</text><text x="1331" y="633">U</text><text x="1354" y="633">S</text></g>
<!-- Notes toolbar -->
<g color="#999"><use href="#un" x="1704" y="600" width="14" height="14"/></g><g color="#777"><use href="#re" x="1726" y="600" width="14" height="14"/></g>
<use href="#dd" x="1749" y="600" width="14" height="14"/><use href="#dcl" x="1772" y="600" width="14" height="14"/><g color="#1f8a50"><use href="#rc" x="1794" y="600" width="14" height="14"/></g>
<use href="#dpg" x="1827" y="600" width="14" height="14"/><use href="#dsc" x="1850" y="600" width="14" height="14"/><use href="#dpa" x="1873" y="600" width="14" height="14"/><use href="#dba" x="1904" y="600" width="14" height="14"/><use href="#ddr" x="1925" y="600" width="14" height="14"/><use href="#dl1" x="1960" y="600" width="14" height="14"/><use href="#dl1" x="1982" y="600" width="14" height="14"/>
<use href="#da1" x="2014" y="600" width="14" height="14"/><use href="#da1" x="2037" y="600" width="14" height="14"/><use href="#di1" x="2069" y="600" width="14" height="14"/><use href="#di1" x="2092" y="600" width="14" height="14"/>
<use href="#dh" x="1704" y="622" width="14" height="14"/><use href="#dlk" x="1726" y="622" width="14" height="14"/><rect x="1749" y="628" width="14" height="1.500" fill="#3a8a4a"/>
<rect x="1880.500" y="619" width="16.500" height="19" fill="#2a2a2a" stroke="#1e1e1e"/>
<use href="#dsq" x="1781" y="622" width="14" height="14"/><use href="#dsq" x="1804" y="622" width="14" height="14"/><use href="#dsq" x="1827" y="622" width="14" height="14"/><use href="#dsq" x="1850" y="622" width="14" height="14"/><use href="#di1" x="1882" y="622" width="14" height="14"/><use href="#di1" x="1904" y="622" width="14" height="14"/><use href="#di1" x="1927" y="622" width="14" height="14"/><use href="#di1" x="1950" y="622" width="14" height="14"/>
<g font-family="Liberation Sans" font-size="10" fill="#444" text-anchor="middle"><text x="1788" y="633">B</text><text x="1811" y="633" font-style="italic">I</text><text x="1834" y="633">U</text><text x="1857" y="633">S</text></g>
<!-- dialog icons -->
<circle cx="1980" cy="762" r="6.500" fill="#6aa84a"/><path d="M1977 762l2.500 2.500 4-5" fill="none" stroke="#e8f5e0" stroke-width="1.600"/>
<path d="M2034 757l-5 4.500 5 4.500v-3h5v-3h-5z" fill="#666"/>
<path d="M2107 757l5 4.500-5 4.500v-3h-5v-3h5z" fill="#3f7fd0"/>
<path d="M2159 756l10 12M2169 756l-10 12" stroke="#aaa" stroke-width="3.200"/>
</svg>
</div>

<!-- red annotations -->
<svg width="2221" height="781">
<rect x="1192.500" y="227.500" width="500" height="36" fill="none" stroke="#b81c1c" stroke-width="1.600"/>
<path d="M484 354L1170 262" stroke="#df1616" stroke-width="2.200"/>
<path d="M480 355L497 343L502 362Z" fill="none" stroke="#df1616" stroke-width="1.800"/>
<path d="M1185 260L1164 254L1166 272Z" fill="none" stroke="#df1616" stroke-width="1.800"/>
</svg>
</body></html>
